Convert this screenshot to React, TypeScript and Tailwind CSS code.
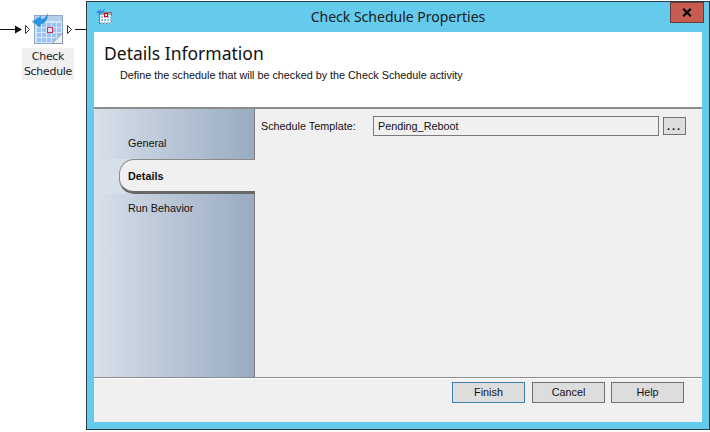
import React from 'react';

const uiFont = "font-['Liberation_Sans',sans-serif]";

function CalendarIcon() {
  const rows = [10, 15, 20, 25];
  const cols = [5, 10, 15, 20, 25];
  return (
    <svg width="32" height="32" viewBox="0 0 32 32" className="block">
      <rect x="2.5" y="2.5" width="28" height="28" fill="#d4e5f8" stroke="#8aa9cc" />
      <rect x="3" y="3" width="27" height="5" fill="#b7cee9" />
      {rows.map((y) =>
        cols.map((x) => <rect key={`${x}-${y}`} x={x} y={y} width="4" height="4" fill="#9cc3f2" />)
      )}
      <rect x="15.5" y="14.5" width="5" height="5" fill="#d4e5f8" stroke="#d62f45" />
      <path d="M20 30.5 L30.5 20 L30.5 30.5 Z" fill="#eef1f3" stroke="#8b9aa8" />
      <path d="M16 0 C14 4 12 6 9 6 L9 3 L0 8.5 L8 14.5 L9 11 C13 11 16 7 16 0 Z" fill="#2f93e2" />
    </svg>
  );
}

function SmallCalendarIcon() {
  const rows = [8, 11, 14];
  const cols = [5, 8, 11, 14];
  return (
    <svg width="16" height="16" viewBox="0 0 16 16" className="block">
      <rect x="3.5" y="4.5" width="12" height="11" fill="#f5f8fc" stroke="#7b7b7b" />
      <rect x="4" y="5" width="11" height="2" fill="#a8a8a8" />
      {rows.map((y) =>
        cols.map((x) => <rect key={`${x}-${y}`} x={x} y={y} width="2" height="2" fill="#8fc0f0" />)
      )}
      <rect x="8.5" y="5.5" width="3" height="3" fill="#fff" stroke="#f00000" />
      <path d="M9 0 C8 2 6.5 3 5 3.2 L5 1.5 L0 4 L4.5 7 L5 5.2 C7 5 8.5 3 9 0 Z" fill="#2a8fe0" />
    </svg>
  );
}

function NavItem({ label, height }: { label: string; height: string }) {
  return <div className={`${height} pl-[34px] flex items-center text-[10.8px] text-[#111]`}>{label}</div>;
}

function FooterButton({ label, className = 'border-[#707070]' }: { label: string; className?: string }) {
  return (
    <button className={`w-[73px] h-[21px] bg-[#dddddd] border text-[10.8px] text-[#111] ${className}`}>
      {label}
    </button>
  );
}

export default function App() {
  return (
    <div className={`w-[710px] h-[432px] bg-white flex items-start overflow-hidden ${uiFont}`}>
      {/* activity on the workflow canvas */}
      <div className="w-[86px] h-[432px] shrink-0 relative">
        <svg width="86" height="40" viewBox="0 0 86 40" className="absolute left-0 top-[9px]">
          <path d="M0 20.5 H16 M75 20.5 H86" stroke="#111" strokeWidth="1" fill="none" />
          <path d="M15 16.5 L22 20.5 L15 24.5 Z" fill="#111" />
          <path d="M25.5 16.5 L29.5 20.5 L25.5 24.5 Z M67.5 16.5 L71.5 20.5 L67.5 24.5 Z" fill="#fff" stroke="#333" />
        </svg>
        <div className="absolute left-[32px] top-[13px]">
          <CalendarIcon />
        </div>
        <div className="absolute left-[22px] top-[48px] w-[52px] h-[32px] bg-[#f0f0f0] text-[11px] leading-[15px] text-center text-[#222] font-['DejaVu_Sans',sans-serif] tracking-[-0.3px] pt-[1px]">
          Check
          <br />
          Schedule
        </div>
      </div>

      {/* dialog window */}
      <div className="w-[624px] h-[429px] mt-[1px] shrink-0 bg-[#65cbec] border border-[#2b3a45] flex flex-col pl-[7px] pr-[7px] pb-[7px]">
        <div className="h-[30px] shrink-0 flex items-start relative">
          <div className="absolute left-[2px] top-[6px]">
            <SmallCalendarIcon />
          </div>
          <div className="flex-1 text-center text-[14px] leading-[30px] text-[#1a1a1a] font-['Noto_Sans',sans-serif]">
            Check Schedule Properties
          </div>
          <div className="absolute right-[-2px] top-0 w-[34px] h-[21px] bg-[#c75c50] border border-[#6b3b38] flex items-center justify-center">
            <svg width="10" height="9" viewBox="0 0 10 9">
              <path d="M1.2 0.8 L8.8 8.2 M8.8 0.8 L1.2 8.2" stroke="#000" strokeWidth="2.2" fill="none" />
            </svg>
          </div>
        </div>

        <div className="flex-1 min-h-0 bg-[#f0f0f0] flex flex-col">
          {/* header */}
          <div className="h-[77px] shrink-0 bg-white border-b-2 border-[#8c8c8c] pl-[10px] pt-[9px]">
            <div className="text-[17.5px] leading-[24px] text-[#111] font-['Noto_Sans',sans-serif]">Details Information</div>
            <div className="mt-[3px] pl-[16px] text-[10.8px] leading-[14px] text-[#111]">
              Define the schedule that will be checked by the Check Schedule activity
            </div>
          </div>

          <div className="h-[268px] shrink-0 flex">
            {/* side nav */}
            <div className="w-[161px] shrink-0 flex flex-col">
              <div className="h-[50px] shrink-0 bg-gradient-to-r from-[#d8e0ea] to-[#99abc2] border-r border-[#7c7c7c] flex flex-col justify-end">
                <NavItem label="General" height="h-[32px]" />
              </div>
              <div className="h-[35px] shrink-0 flex bg-gradient-to-r from-[#d8e0ea] to-[#cdd7e2]">
                <div className="ml-[25px] flex-1 bg-[#f0f0f0] border border-r-0 border-[#8a8a8a] border-b-[3px] border-b-[#686868] rounded-l-[15px] flex items-center pl-[8px] pt-[2px] text-[10.8px] font-bold text-[#111]">
                  Details
                </div>
              </div>
              <div className="flex-1 bg-gradient-to-r from-[#d8e0ea] to-[#99abc2] border-r border-[#7c7c7c]">
                <NavItem label="Run Behavior" height="h-[28px]" />
              </div>
            </div>

            {/* form */}
            <div className="flex-1 flex items-start pt-[7px] pl-[6px]">
              <div className="w-[112px] shrink-0 text-[10.8px] leading-[20px] text-[#111]">Schedule Template:</div>
              <div className="w-[286px] h-[20px] shrink-0 border border-[#7a7a7a] pl-[4px] text-[10.8px] leading-[19px] text-[#111]">
                Pending_Reboot
              </div>
              <button className="ml-[4px] mt-[1px] w-[23px] h-[18px] bg-[#dddddd] border border-[#707070] text-[11px] font-bold tracking-[2px] leading-[14px] text-[#111]">
                ...
              </button>
            </div>
          </div>

          {/* footer */}
          <div className="flex-1 min-h-0 border-t border-[#8c8c8c] shadow-[inset_0_1px_0_#fff] flex items-start justify-end pt-[4px] pr-[18px] gap-[7px]">
            <FooterButton label="Finish" className="border-[#3c7fb1]" />
            <FooterButton label="Cancel" />
            <FooterButton label="Help" className="border-[#707070] ml-[-1px]" />
          </div>
        </div>
      </div>
    </div>
  );
}
